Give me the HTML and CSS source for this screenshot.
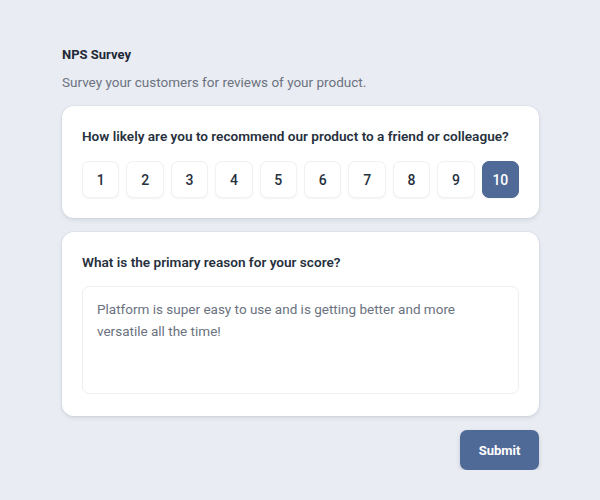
FILE: index.html
```html
<!DOCTYPE html>
<html lang="en">
<head>
<meta charset="utf-8">
<title>NPS Survey</title>
<link rel="stylesheet" href="styles.css">
</head>
<body>
<main class="survey">
  <h1 class="title">NPS Survey</h1>
  <p class="subtitle">Survey your customers for reviews of your product.</p>
  <section class="card">
    <h2 class="question">How likely are you to recommend our product to a friend or colleague?</h2>
    <div class="scale">
      <button class="score">1</button>
      <button class="score">2</button>
      <button class="score">3</button>
      <button class="score">4</button>
      <button class="score">5</button>
      <button class="score">6</button>
      <button class="score">7</button>
      <button class="score">8</button>
      <button class="score">9</button>
      <button class="score selected">10</button>
    </div>
  </section>
  <section class="card card-reason">
    <h2 class="question">What is the primary reason for your score?</h2>
    <div class="answer">Platform is super easy to use and is getting better and more versatile all the time!</div>
  </section>
  <div class="actions">
    <button class="submit">Submit</button>
  </div>
</main>
</body>
</html>
```
FILE: styles.css
```css
html, body {
  margin: 0;
  padding: 0;
  background: #e9ecf2;
  font-family: Roboto, "Noto Sans", sans-serif;
}

.survey {
  width: 477px;
  margin-left: 62px;
  padding-top: 45px;
  display: flex;
  flex-direction: column;
}

.title {
  margin: 0;
  font-size: 13px;
  line-height: 20px;
  font-weight: 700;
  color: #1f2937;
}

.subtitle {
  margin: 7px 0 14px;
  font-size: 13.5px;
  line-height: 20px;
  color: #6b7280;
}

.card {
  background: #ffffff;
  border-radius: 12px;
  padding: 20px;
  box-shadow: 0 2px 4px rgba(60, 72, 100, 0.12), 0 0 0 1px rgba(60, 72, 100, 0.04);
  margin-bottom: 14px;
}

.card-reason {
  padding-bottom: 22px;
}

.question {
  margin: 0;
  font-size: 13.6px;
  line-height: 20px;
  font-weight: 600;
  color: #27303d;
  white-space: nowrap;
}

.scale {
  margin-top: 15px;
  display: flex;
  gap: 7px;
}

.score {
  flex: 1;
  height: 37px;
  padding: 0;
  border: 1px solid #f0f1f4;
  border-radius: 7px;
  background: #ffffff;
  font-family: inherit;
  font-size: 14px;
  font-weight: 500;
  color: #27303d;
  box-shadow: 0 1px 2px rgba(60, 72, 100, 0.06);
}

.score.selected {
  background: #506a98;
  border-color: #506a98;
  color: #ffffff;
}

.answer {
  margin-top: 14px;
  height: 108px;
  box-sizing: border-box;
  padding: 11px 14px;
  border: 1px solid #eceef2;
  border-radius: 7px;
  font-size: 13.5px;
  line-height: 22px;
  color: #6b7280;
}

.actions {
  display: flex;
  justify-content: flex-end;
}

.submit {
  width: 79px;
  height: 40px;
  border: none;
  border-radius: 7px;
  background: #506a98;
  color: #ffffff;
  font-family: inherit;
  font-size: 13px;
  font-weight: 700;
  box-shadow: 0 2px 4px rgba(60, 72, 100, 0.2);
}
```
